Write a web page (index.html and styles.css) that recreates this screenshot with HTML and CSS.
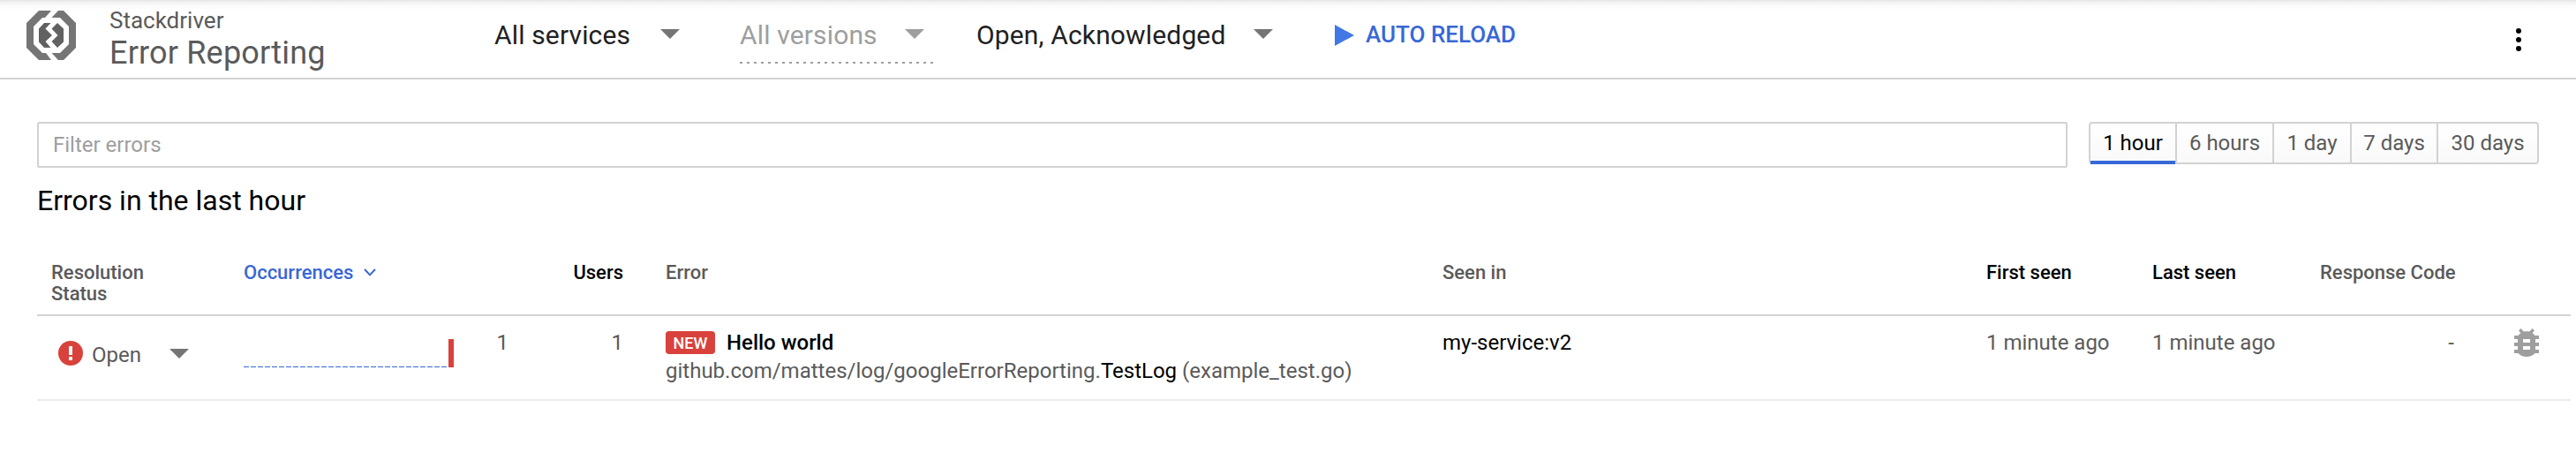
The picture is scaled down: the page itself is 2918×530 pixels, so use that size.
FILE: index.html
```html
<!DOCTYPE html>
<html lang="en">
<head>
<meta charset="utf-8">
<title>Error Reporting</title>
<link rel="stylesheet" href="styles.css">
</head>
<body>
<header class="topbar">
  <svg class="logo" viewBox="0 0 56 56">
    <path fill="#757575" d="M14 0H28L21 8H18L8 18V38L18 48H22L28 56H14L0 42V14Z"/>
    <path fill="#757575" d="M36 0H42L56 14V42L42 56H36L28.500 48H38L48 38V18L38 8H28.500Z"/>
    <path fill="#616161" d="M20 14H27.500L21.500 20.500L29 28L21.500 35L27.500 42H20L14 35.500V20.500Z"/>
    <path fill="#616161" d="M35 14L42 20.500V35.500L35 42L28.500 35L35.500 28L28.500 20.500Z"/>
  </svg>
  <div class="product">
    <div class="suite">Stackdriver</div>
    <h1 class="name">Error Reporting</h1>
  </div>
  <div class="select services"><span>All services</span><i class="caret"></i></div>
  <div class="select versions"><span>All versions</span><i class="caret"></i></div>
  <div class="select status-filter"><span>Open, Acknowledged</span><i class="caret"></i></div>
  <div class="reload"><i class="play"></i><span>AUTO RELOAD</span></div>
  <svg class="more" viewBox="0 0 6 26"><circle cx="3" cy="3" r="3"/><circle cx="3" cy="13" r="3"/><circle cx="3" cy="23" r="3"/></svg>
</header>
<main class="content">
  <div class="toolbar">
    <div class="filter">Filter errors</div>
    <div class="ranges">
      <div class="range r1 active">1 hour</div>
      <div class="range r2">6 hours</div>
      <div class="range r3">1 day</div>
      <div class="range r4">7 days</div>
      <div class="range r5">30 days</div>
    </div>
  </div>
  <h2 class="heading">Errors in the last hour</h2>
  <div class="grid head">
    <div class="resolution">Resolution<br>Status</div>
    <div class="sorted">Occurrences<svg class="chevron" viewBox="0 0 14 9"><path d="M1 1L7 7.400L13 1"/></svg></div>
    <div></div>
    <div class="num sortable">Users</div>
    <div class="err">Error</div>
    <div>Seen in</div>
    <div class="sortable">First seen</div>
    <div class="sortable">Last seen</div>
    <div class="num code">Response Code</div>
    <div></div>
  </div>
  <div class="grid row">
    <div class="state">
      <svg class="alert" viewBox="0 0 28 28"><circle cx="14" cy="14" r="14" fill="#d9423c"/><path fill="#fff" d="M12 6h4v10h-4zM12 18h4v4h-4z"/></svg>
      <span class="state-name">Open</span><i class="caret"></i>
    </div>
    <div class="spark"><div class="baseline"></div><div class="bar"></div></div>
    <div class="num">1</div>
    <div class="num">1</div>
    <div class="err">
      <div class="title"><b class="badge">NEW</b>Hello world</div>
      <div class="where">github.com/mattes/log/googleErrorReporting.<em>TestLog</em> (example_test.go)</div>
    </div>
    <div class="dark">my-service:v2</div>
    <div>1 minute ago</div>
    <div>1 minute ago</div>
    <div class="num">-</div>
    <div class="bugcell"><svg class="bug" viewBox="0 0 28 32"><path fill="#9e9e9e" fill-rule="evenodd" d="M28 8H23.400C22.700 6.800 21.700 5.700 20.600 4.900L23 2.500L20.600 0L17.100 3.600C15 3.200 13 3.200 10.900 3.600L7.400 0L5 2.500L7.400 4.900C6.300 5.700 5.300 6.800 4.600 8H0V12H4V16H0V20H4V24H0V28H4.600C8.500 33.300 19.500 33.300 23.400 28H28V24H24V20H28V16H24V12H28ZM18 24H10V20H18ZM18 16H10V12H18Z"/></svg></div>
  </div>
</main>
</body>
</html>
```
FILE: styles.css
```css
* { box-sizing: border-box; }
body { margin: 0; background: #fff; color: #5a5a5a; font-family: Roboto, sans-serif; font-size: 24px; }
h1, h2 { margin: 0; font-weight: 400; }
.caret { display: block; border: 11px solid transparent; border-top-color: #757575; border-bottom: 0; }

.topbar { display: flex; align-items: flex-start; height: 90px; border-bottom: 2px solid #d2d2d2; padding-left: 30px; background: linear-gradient(#e4e4e4, #f0f0f0 2px, #fafafa 6px, #fff 12px); }
.logo { width: 56px; height: 56px; margin-top: 12px; }
.product { width: 436px; padding: 8px 0 0 38px; }
.suite { font-size: 26px; line-height: 30px; }
.name { font-size: 36px; line-height: 44px; letter-spacing: 0.18px; }
.select { display: flex; align-items: center; justify-content: space-between; height: 72px; padding: 8px 10px 0 0; color: #212121; font-size: 30px; line-height: 36px; letter-spacing: 0.15px; }
.select .caret { margin-bottom: 3px; }
.services { width: 220px; margin-left: 38px; }
.versions { width: 219px; margin-left: 58px; color: #9e9e9e; background: repeating-linear-gradient(90deg, #9e9e9e 0 3px, transparent 3px 8px) bottom / 100% 2px no-repeat; }
.versions .caret { border-top-color: #9e9e9e; }
.status-filter { width: 346px; margin-left: 49px; }
.reload { display: flex; align-items: center; height: 78px; margin-left: 60px; color: #3867d6; font-size: 26px; font-weight: 500; }
.play { border: 12px solid transparent; border-left: 22px solid #4278e4; border-right: 0; margin: 2px 13px 0 0; }
.more { width: 6px; height: 26px; margin: 32px 62px 0 auto; }

.content { padding: 0 6px 0 42px; }
.toolbar { display: flex; align-items: flex-start; margin-top: 48px; }
.filter { width: 2300px; height: 52px; border: 2px solid #d2d2d2; border-radius: 2px; padding-left: 16px; line-height: 48px; color: #9e9e9e; }
.ranges { display: flex; width: 510px; height: 48px; margin-left: 24px; border: 2px solid #d2d2d2; border-radius: 4px; background: linear-gradient(#fff, #f9f9f9); line-height: 44px; }
.range { border-left: 2px solid #d2d2d2; text-align: center; }
.r1 { width: 96px; border-left: 0; }
.r2 { width: 110px; }
.r3 { width: 88px; }
.r4 { width: 98px; }
.r5 { flex: 1; }
.range.active { color: #000; height: 46px; border-bottom: 4px solid #3867d6; }
.heading { font-size: 32px; line-height: 40px; margin-top: 17px; color: #000; }

.grid { display: grid; grid-template-columns: 234px 240px 60px 130px 928px 616px 188px 190px 152px 1fr; }
.num { text-align: right; white-space: nowrap; }
.err { padding-left: 48px; }
.head { font-size: 22px; font-weight: 500; line-height: 24px; height: 111px; padding-top: 50px; border-bottom: 2px solid #d2d2d2; }
.resolution { padding-left: 16px; }
.code { padding-right: 1px; }
.sorted { color: #3867d6; }
.chevron { width: 14px; height: 9px; margin-left: 12px; vertical-align: 3px; fill: none; stroke: #3867d6; stroke-width: 2; }
.sortable, .dark { color: #000; }
.row { height: 96px; padding-top: 14px; line-height: 32px; border-bottom: 2px solid #ebebeb; }
.state { display: flex; align-items: center; height: 32px; margin-top: 12px; padding-left: 24px; }
.state-name { padding-top: 3px; }
.alert { width: 28px; height: 28px; margin-right: 10px; }
.state .caret { margin-left: 32px; }
.spark { display: flex; align-items: flex-end; height: 32px; margin-top: 12px; }
.baseline { width: 232px; height: 1px; background: repeating-linear-gradient(90deg, #3867d6 0 6px, transparent 6px 8px); }
.bar { width: 6px; height: 32px; background: #d9423c; }
.title { display: flex; align-items: center; height: 32px; color: #000; font-weight: 500; }
.badge { width: 56px; height: 26px; margin-right: 13px; border-radius: 4px; background: #d9423c; color: #fff; font-size: 18px; font-weight: 500; line-height: 27px; text-align: center; }
.where em { font-style: normal; color: #000; }
.bugcell { padding-left: 68px; }
.bug { display: block; width: 28px; height: 32px; }
```
